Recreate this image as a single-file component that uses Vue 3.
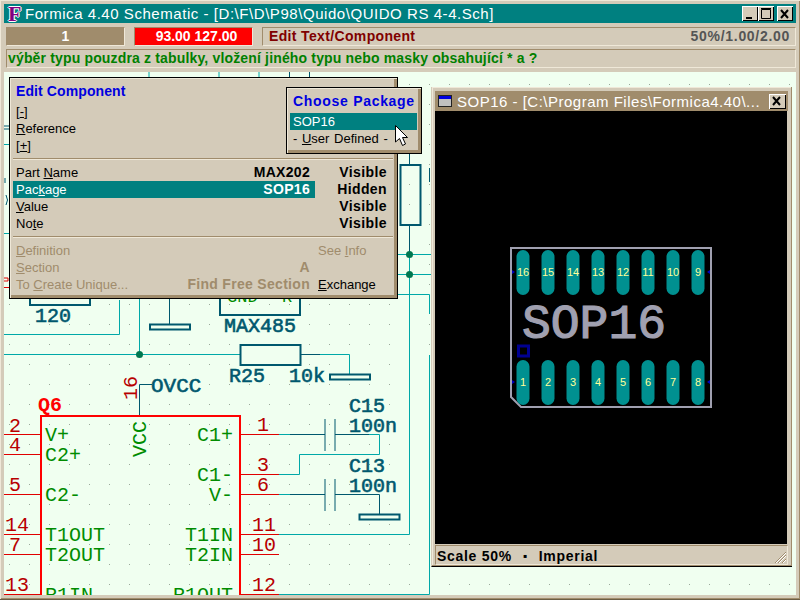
<template>
  <div class="main-window">
    <!-- title bar -->
    <div class="titlebar">
      <span class="app-icon">F</span>
      <span class="title-text">Formica 4.40 Schematic - [D:\F\D\P98\Quido\QUIDO RS 4-4.Sch]</span>
      <div class="win-buttons">
        <button class="win-btn"><svg width="16" height="14"><rect x="4" y="10" width="6" height="2" fill="#000" /></svg></button>
        <button class="win-btn"><svg width="16" height="14"><path d="M3.500 2.500h9v9h-9z M3 1.500h10" fill="none" stroke="#000" /></svg></button>
        <button class="win-btn close"><svg width="16" height="14"><path d="M4 3l7 8M11 3l-7 8" stroke="#000" stroke-width="2" /></svg></button>
      </div>
    </div>

    <!-- status rows -->
    <div class="info-row">
      <div class="cell sheet">1</div>
      <div class="cell coords">93.00 127.00</div>
      <div class="cell mode">
        <span>Edit Text/Component</span>
        <span class="zoom-info">50%/1.00/2.00</span>
      </div>
    </div>
    <div class="hint">výběr typu pouzdra z tabulky, vložení jiného typu nebo masky obsahující * a ?</div>

    <!-- drawing area -->
    <div class="canvas">
      <svg class="sheet-svg" width="792" height="524" viewBox="4 72 792 524">
        <defs>
          <pattern id="grid" x="9" y="4" width="20" height="20" patternUnits="userSpaceOnUse">
            <rect width="1" height="1" fill="#9aa89a" />
          </pattern>
        </defs>
        <rect x="4" y="72" width="792" height="524" fill="url(#grid)" />

        <!-- nets -->
        <path v-for="(d, i) in nets" :key="'n' + i" :d="d" class="net" />
        <path v-for="(d, i) in wires" :key="'w' + i" :d="d" class="wire" />
        <path d="M4 278h4v3h-4M4 287.500h5" fill="none" stroke="#e00000" />
        <circle v-for="j in junctions" :key="j.x + '-' + j.y" :cx="j.x" :cy="j.y" r="3.500" fill="#007850" />

        <!-- parts behind the dialog -->
        <rect x="30" y="290" width="60" height="15" class="part" />
        <rect x="220" y="290" width="80" height="25" class="part" />
        <rect x="240.500" y="345" width="60" height="20" class="part" />
        <rect x="400.500" y="165" width="20" height="60" class="part" />
        <rect x="150" y="324.500" width="40" height="5" class="part thin" />
        <rect x="330" y="374.500" width="40" height="5" class="part thin" />
        <rect x="359.500" y="514.500" width="40" height="5" class="part thin" />
        <text x="227" y="302" class="pin-name frag">GND</text>
        <text x="282" y="302" class="pin-name frag">R</text>
        <text x="35" y="322" class="label">120</text>
        <text x="224" y="332" class="label">MAX485</text>
        <text x="229" y="382" class="label">R25</text>
        <text x="289" y="382" class="label">10k</text>
        <text x="349" y="412" class="label">C15</text>
        <text x="349" y="432" class="label">100n</text>
        <text x="349" y="472" class="label">C13</text>
        <text x="349" y="492" class="label">100n</text>
        <text x="151" y="392" class="label big">OVCC</text>

        <!-- Q6 -->
        <path v-for="y in leftPins" :key="'l' + y" :d="`M4 ${y + 0.5}H40`" class="pin" />
        <path v-for="y in rightPins" :key="'r' + y" :d="`M240 ${y + 0.5}H279`" class="pin" />
        <path d="M41 596V416H240V596" class="body" />
        <text x="38" y="411" class="ref">Q6</text>
        <text v-for="t in pinNumbers" :key="t.text" :x="t.x" :y="t.y" class="pin-no">{{ t.text }}</text>
        <text v-for="t in pinNames" :key="t.text" :x="t.x" :y="t.y" :text-anchor="t.end ? 'end' : 'start'" class="pin-name">{{ t.text }}</text>
        <text transform="translate(137 400) rotate(-90)" class="pin-no">16</text>
        <text transform="translate(146 457) rotate(-90)" class="pin-name">VCC</text>
      </svg>

      <!-- Edit Component dialog -->
      <div class="dialog edit-dialog">
        <div class="dlg-title">Edit Component</div>
        <div class="row top-row">[<u>-</u>]</div>
        <div class="row"><span><u>R</u>eference</span></div>
        <div class="row">[<u>+</u>]</div>
        <div class="divider"></div>
        <div v-for="r in fields" :key="r.value" class="row field" :class="{ active: r.active }">
          <span class="f-name"><template v-for="p in r.parts" :key="p.t"><u v-if="p.u">{{ p.t }}</u><template v-else>{{ p.t }}</template></template></span>
          <span class="f-value">{{ r.value }}</span>
          <span class="f-vis">{{ r.vis }}</span>
        </div>
        <div class="divider"></div>
        <div class="row field off">
          <span class="f-name"><u>D</u>efinition</span><span class="f-value"></span>
          <span class="f-side">See <u>I</u>nfo</span>
        </div>
        <div class="row field off">
          <span class="f-name"><u>S</u>ection</span><span class="f-value">A</span>
          <span class="f-side"></span>
        </div>
        <div class="row field off">
          <span class="f-name">To <u>C</u>reate Unique...</span><span class="f-value">Find Free Section</span>
          <span class="f-side on"><u>E</u>xchange</span>
        </div>
      </div>

      <!-- Choose Package popup -->
      <div class="dialog pkg-dialog">
        <div class="dlg-title">Choose Package</div>
        <div class="pkg-item active">SOP16</div>
        <div class="pkg-item">- <u>U</u>ser Defined -</div>
      </div>

      <!-- preview window -->
      <div class="preview">
        <div class="preview-title">
          <svg class="doc-icon" width="15" height="12"><rect x="0.500" y="0.500" width="13" height="11" fill="#c0c0c0" stroke="#222" /><rect x="1" y="1" width="12" height="3" fill="#0000e0" /></svg>
          <span class="preview-text">SOP16 - [C:\Program Files\Formica4.40\...</span>
          <button class="win-btn close small"><svg width="16" height="14"><path d="M4 3l7 8M11 3l-7 8" stroke="#000" stroke-width="2" /></svg></button>
        </div>
        <svg class="footprint" width="352" height="433" viewBox="435 111 352 433">
          <path d="M511 248H711V407H521L511 397Z" fill="none" stroke="#a0a0b0" stroke-width="2" />
          <template v-for="(x, i) in padX" :key="x">
            <rect :x="x - 6.5" y="250" width="13" height="45" rx="6.500" fill="#009090" />
            <rect :x="x - 6.5" y="360" width="13" height="45" rx="6.500" fill="#009090" />
            <text :x="x" y="276" class="pad-no">{{ 16 - i }}</text>
            <text :x="x" y="386" class="pad-no">{{ i + 1 }}</text>
          </template>
          <path d="M512 270l3 2-3 2zM512 380l3 2-3 2zM710 270l-3 2 3 2zM710 380l-3 2 3 2z" fill="#0000c0" />
          <rect x="518.500" y="346" width="10" height="10" fill="none" stroke="#000090" stroke-width="3" />
          <text x="522" y="338" class="pkg-name">SOP16</text>
        </svg>
        <div class="preview-status">
          <span>Scale 50%</span><span class="dot">▪</span><span>Imperial</span>
          <svg class="grip" width="13" height="13"><path d="M12 1L1 12M12 4L4 12M12 8L8 12" stroke="#a08c6c" stroke-width="1" /><path d="M12 2L2 12M12 5L5 12M12 9L9 12" stroke="#fff" stroke-width="1" /></svg>
        </div>
      </div>

      <!-- mouse pointer -->
      <svg class="pointer" width="14" height="23" viewBox="0 0 14 23">
        <path d="M.500.500V17L4.500 13.500L7.500 20.500L10.500 19L7.500 12.500H12.500Z" fill="#fff" stroke="#000" />
      </svg>
    </div>
  </div>
</template>

<script setup>
const nets = [
  "M149 72V77M219 72V77M259 72V77",
  "M4 144.500H9M4 233.500H9",
  "M4 334.500H119.500V300",
  "M139.500 298V354M4 354.500H240",
  "M320 354.500H349.500V375",
  "M397 254.500H431M397 274.500H431M397 294.500H429.500V314",
  "M409.500 250V534.500H279",
  "M429.500 355V594.500H279",
  "M279 434.500H290M369 434.500H379.500V454.500H299.500V474.500H279",
  "M279 494.500H290"
]

const wires = [
  "M289.500 72V77M309.500 72V77",
  "M4 126H9M4 129H9",
  "M5 178v5M6 195q3 5 0 10",
  "M409.500 150V165M409.500 225V252",
  "M169.500 298V325",
  "M300 354.500H320",
  "M290 434.500H325M335 434.500H369",
  "M290 494.500H325M335 494.500H379.500V515",
  "M325 419V451M335 419V451M325 479V511M335 479V511",
  "M139.500 415V384.500H152",
  "M429.500 168V182"
]

const junctions = [
  { x: 139.5, y: 354.5 },
  { x: 409.5, y: 254.5 },
  { x: 409.5, y: 274.5 }
]

const leftPins = [434, 454, 494, 534, 554, 594]
const rightPins = [434, 474, 494, 534, 554, 594]

const pinNumbers = [
  { text: "2", x: 9, y: 432 },
  { text: "4", x: 9, y: 451 },
  { text: "5", x: 9, y: 491 },
  { text: "14", x: 5, y: 531 },
  { text: "7", x: 9, y: 551 },
  { text: "13", x: 5, y: 591 },
  { text: "1", x: 257, y: 431 },
  { text: "3", x: 257, y: 471 },
  { text: "6", x: 257, y: 491 },
  { text: "11", x: 252, y: 531 },
  { text: "10", x: 252, y: 551 },
  { text: "12", x: 252, y: 591 }
]

const pinNames = [
  { text: "V+", x: 45, y: 441 },
  { text: "C2+", x: 45, y: 461 },
  { text: "C2-", x: 45, y: 501 },
  { text: "T1OUT", x: 45, y: 541 },
  { text: "T2OUT", x: 45, y: 561 },
  { text: "R1IN", x: 45, y: 601 },
  { text: "C1+", x: 233, y: 441, end: true },
  { text: "C1-", x: 233, y: 481, end: true },
  { text: "V-", x: 233, y: 501, end: true },
  { text: "T1IN", x: 233, y: 541, end: true },
  { text: "T2IN", x: 233, y: 561, end: true },
  { text: "R1OUT", x: 233, y: 601, end: true }
]

const fields = [
  { parts: [{ t: "Part " }, { t: "N", u: true }, { t: "ame" }], value: "MAX202", vis: "Visible" },
  { parts: [{ t: "Pac" }, { t: "k", u: true }, { t: "age" }], value: "SOP16", vis: "Hidden", active: true },
  { parts: [{ t: "V", u: true }, { t: "alue" }], value: " ", vis: "Visible" },
  { parts: [{ t: "No" }, { t: "t", u: true }, { t: "e" }], value: "  ", vis: "Visible" }
]

const padX = [523, 548, 573, 598, 623, 648, 673, 698]
</script>

<style scoped>
.main-window {
  width: 800px;
  height: 600px;
  box-sizing: border-box;
  padding: 4px 4px 4px;
  background: #d4cbb9;
  border-bottom: 1px solid #6b5d45;
  box-shadow: inset 1px 1px 0 #efe8d8, inset -1px -1px 0 #a08c6c;
  display: flex;
  flex-direction: column;
  overflow: hidden;
  font-family: "Liberation Sans", Arial, sans-serif;
  font-size: 14px;
}

.titlebar {
  height: 19px;
  flex: none;
  background: #008080;
  color: #fff;
  display: flex;
  align-items: center;
  position: relative;
}

.app-icon {
  width: 16px;
  margin-left: 4px;
  font-family: "Liberation Serif", serif;
  font-weight: bold;
  font-size: 22px;
  line-height: 19px;
  color: #800080;
  text-shadow: 1px 0 0 #fff, -1px 0 0 #fff, 0 1px 0 #fff, 0 -1px 0 #fff;
}

.title-text {
  margin-left: 1px;
  font-size: 15px;
  letter-spacing: 0.55px;
  white-space: nowrap;
}

.win-buttons {
  margin-left: auto;
  margin-right: 3px;
  display: flex;
}

.win-btn {
  width: 16px;
  height: 15px;
  padding: 0;
  border: none;
  background: #d4cbb9;
  box-shadow: inset 1px 1px 0 #fff, inset -1px -1px 0 #000;
  display: block;
}

.win-btn svg {
  display: block;
}

.win-btn.close {
  margin-left: 3px;
}

.info-row {
  display: flex;
  margin: 4px 0 0 2px;
  height: 19px;
  flex: none;
}

.cell {
  box-sizing: border-box;
  height: 19px;
  line-height: 17px;
  font-weight: bold;
  border: 1px solid;
  border-color: #a08c6c #efe8d8 #efe8d8 #a08c6c;
  letter-spacing: 0.2px;
}

.sheet {
  width: 119px;
  background: #a08c6c;
  color: #fff;
  text-align: center;
}

.coords {
  width: 119px;
  margin-left: 9px;
  padding-left: 6px;
  background: #ff0000;
  color: #fff;
  text-align: center;
  letter-spacing: 0;
}

.mode {
  flex: 1;
  margin-left: 9px;
  padding: 0 5px 0 6px;
  color: #800000;
  display: flex;
  justify-content: space-between;
  letter-spacing: 0.35px;
}

.zoom-info {
  color: #555;
  letter-spacing: 0.7px;
}

.hint {
  box-sizing: border-box;
  margin: 3px 0 0 2px;
  height: 19px;
  flex: none;
  line-height: 17px;
  padding-left: 1px;
  font-weight: bold;
  color: #008000;
  letter-spacing: 0.16px;
  border: 1px solid;
  border-color: #a08c6c #efe8d8 #efe8d8 #a08c6c;
}

.canvas {
  position: relative;
  margin-top: 4px;
  flex: 1;
  background: #f0fff0;
  overflow: hidden;
}

.sheet-svg {
  position: absolute;
  left: 0;
  top: 0;
}

.net {
  fill: none;
  stroke: #00a8a8;
  stroke-width: 1;
}

.wire {
  fill: none;
  stroke: #00586e;
  stroke-width: 1;
}

.part {
  fill: none;
  stroke: #00586e;
  stroke-width: 2;
}

.part.thin {
  fill: #f0fff0;
}

.pin {
  stroke: #e00000;
  stroke-width: 1;
}

.body {
  fill: none;
  stroke: #ff0000;
  stroke-width: 2;
}

.sheet-svg text {
  font-family: "Liberation Mono", monospace;
  font-size: 20px;
}

.sheet-svg .label {
  fill: #00586e;
  stroke: #00586e;
  stroke-width: 0.6;
}

.sheet-svg .label.big {
  font-size: 21px;
}

.sheet-svg .ref {
  fill: #ff0000;
  font-weight: bold;
}

.sheet-svg .pin-no {
  fill: #b80000;
}

.sheet-svg .pin-name {
  fill: #008c00;
}

.sheet-svg .pin-name.frag {
  font-size: 17px;
}

.dialog {
  position: absolute;
  box-sizing: border-box;
  background: #d4cbb9;
  border: 1px solid #000;
  box-shadow: inset 1px 1px 0 #efe8d8, inset -3px -3px 0 #a08c6c;
  color: #000;
}

.edit-dialog {
  left: 5px;
  top: 5px;
  width: 389px;
  height: 222px;
  padding: 5px 4px 5px 3px;
}

.dlg-title {
  color: #0000e0;
  font-weight: bold;
  font-size: 14px;
  letter-spacing: 0.1px;
  padding-left: 3px;
  height: 17px;
  line-height: 17px;
  white-space: nowrap;
}

.top-row {
  margin-top: 3px;
}

.row {
  height: 17px;
  line-height: 17px;
  padding-left: 3px;
  font-size: 13px;
  white-space: pre;
}

.divider {
  height: 0;
  margin: 4px 0;
  border-top: 1px solid #a08c6c;
  border-bottom: 1px solid #efe8d8;
}

.field {
  display: grid;
  grid-template-columns: 116px 183px 72px;
}

.f-value {
  text-align: right;
  font-weight: bold;
  font-size: 14px;
  letter-spacing: 0.3px;
  padding-right: 5px;
}

.f-vis {
  text-align: right;
  font-weight: bold;
  font-size: 14px;
  letter-spacing: 0.4px;
}

.field.active {
  background: linear-gradient(to right, #008080 302px, transparent 302px);
}

.field.active .f-name,
.field.active .f-value {
  color: #fff;
}

.f-side {
  padding-left: 3px;
}

.off {
  color: #a08c6c;
}

.f-side.on {
  color: #000;
}

.pkg-dialog {
  left: 282px;
  top: 15px;
  width: 136px;
  height: 67px;
  padding: 5px 4px 5px 3px;
}

.pkg-dialog .dlg-title {
  margin-bottom: 3px;
  letter-spacing: 0.7px;
}

.pkg-item {
  height: 17px;
  line-height: 17px;
  padding-left: 3px;
  font-size: 13px;
  word-spacing: 1px;
}

.pkg-item.active {
  background: #008080;
  color: #fff;
}

.preview {
  position: absolute;
  left: 427px;
  top: 15px;
  width: 361px;
  height: 480px;
  box-sizing: border-box;
  padding: 4px 4px 4px 3px;
  background: #d4cbb9;
  border-bottom: 1px solid #000;
  border-left: 1px solid #d4cbb9;
  box-shadow: inset -1px -1px 0 #a08c6c, inset 1px 1px 0 #efe8d8;
  display: flex;
  flex-direction: column;
}

.preview-title {
  height: 20px;
  flex: none;
  background: #a08c6c;
  color: #fff;
  display: flex;
  align-items: center;
}

.doc-icon {
  margin-left: 3px;
  flex: none;
}

.preview-text {
  margin-left: 4px;
  font-size: 15px;
  letter-spacing: 0.5px;
  white-space: nowrap;
}

.win-btn.small {
  margin-left: auto;
  margin-right: 2px;
  width: 17px;
}

.footprint {
  display: block;
  flex: none;
  background: #000;
}

.pad-no {
  fill: #ffff99;
  font-family: "Liberation Sans", sans-serif;
  font-size: 11px;
  text-anchor: middle;
}

.pkg-name {
  fill: #a0a0b0;
  stroke: #a0a0b0;
  stroke-width: 1.2;
  font-family: "Liberation Mono", monospace;
  font-size: 48px;
}

.preview-status {
  position: relative;
  margin-top: 1px;
  flex: 1;
  box-sizing: border-box;
  padding: 2px 0 0 1px;
  border: 1px solid;
  border-color: #a08c6c #efe8d8 #efe8d8 #a08c6c;
  display: flex;
  align-items: center;
  font-weight: bold;
  font-size: 14px;
  letter-spacing: 0.7px;
}

.dot {
  margin: 0 11px;
  font-size: 12px;
}

.grip {
  position: absolute;
  right: 0;
  bottom: 0;
}

.pointer {
  position: absolute;
  left: 391px;
  top: 53px;
}
</style>
